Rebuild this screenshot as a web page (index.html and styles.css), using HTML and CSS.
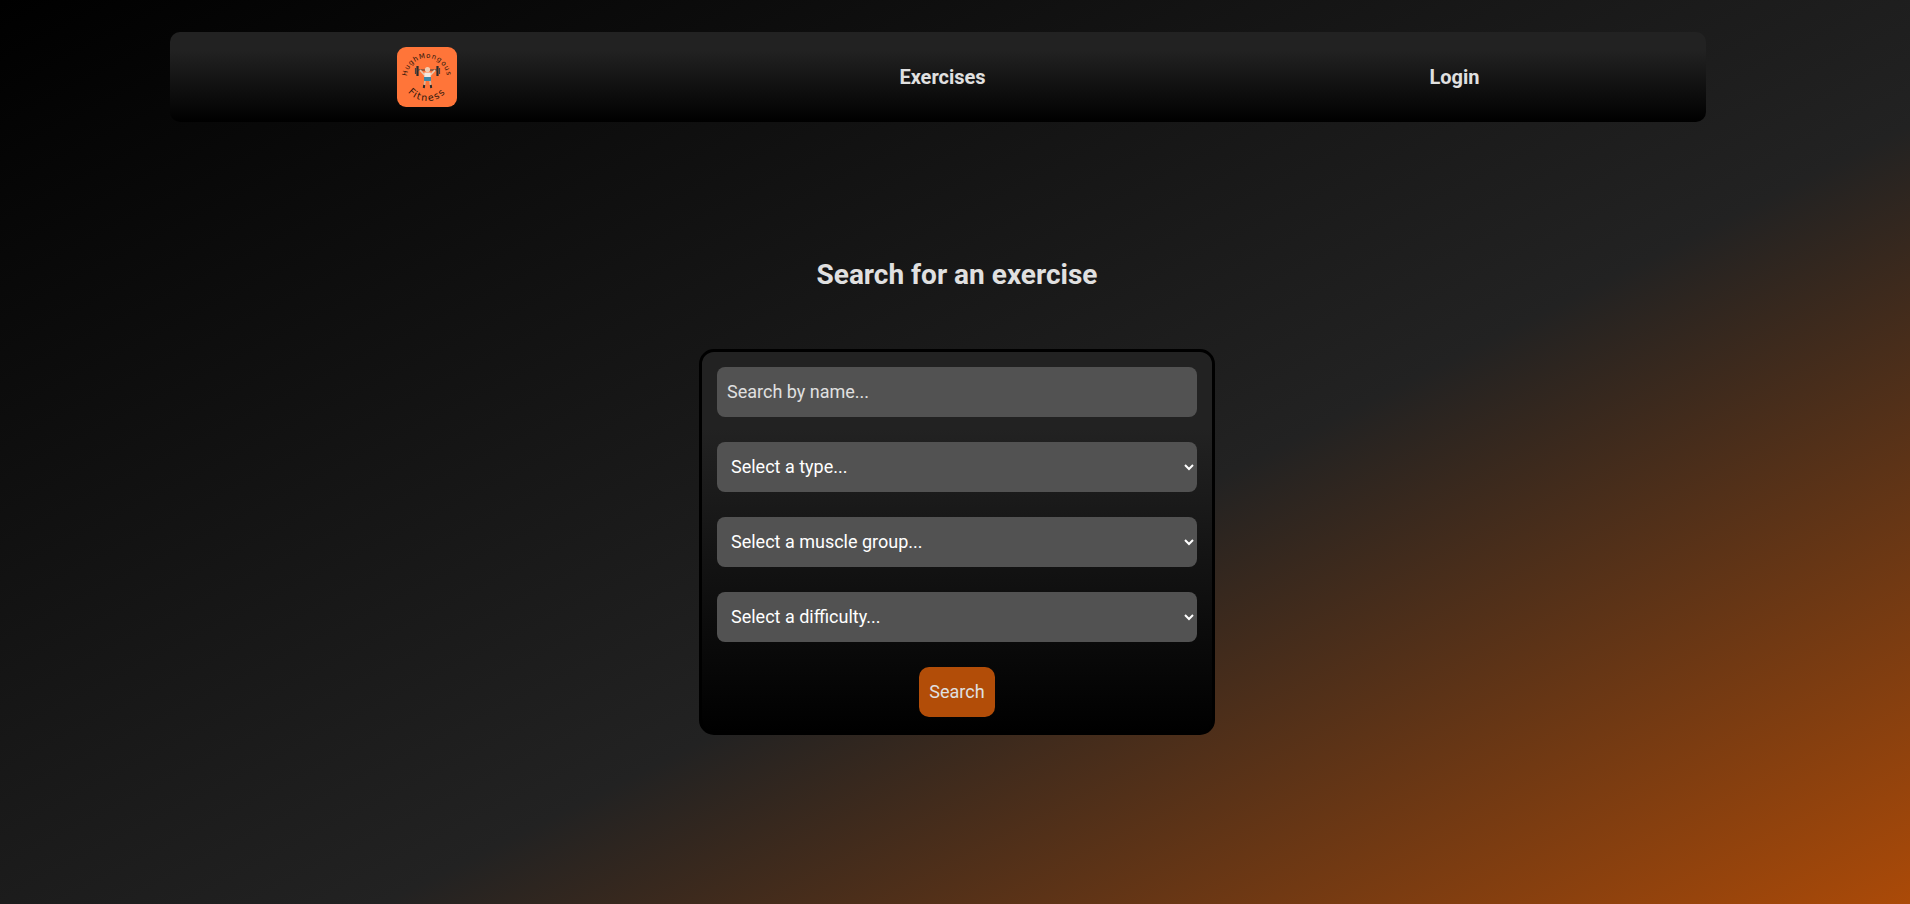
FILE: index.html
```html
<!DOCTYPE html>
<html lang="en">
<head>
  <meta charset="UTF-8">
  <meta name="viewport" content="width=device-width, initial-scale=1.0">
  <title>Exercises</title>
  <link rel="stylesheet" href="styles.css">
</head>
<body>
  <nav class="navbar">
    <a class="nav-item nav-logo" href="#">
      <svg class="logo" viewBox="0 0 60 60" role="img" aria-label="HughMongous Fitness">
        <defs>
          <path id="arcTop" d="M10 31 A20 20 0 0 1 50 31"></path>
          <path id="arcBottom" d="M5 29 A25 25 0 0 0 55 29"></path>
        </defs>
        <rect width="60" height="60" rx="9" fill="#ff7539"></rect>
        <text class="logo-top"><textPath href="#arcTop" startOffset="50%" text-anchor="middle">HughMongous</textPath></text>
        <text class="logo-bottom"><textPath href="#arcBottom" startOffset="50%" text-anchor="middle">Fitness</textPath></text>
        <!-- lifter -->
        <path d="M20.5 19v10M40.5 19v10" stroke="#2b2b2b" stroke-width="2.2"></path>
        <path d="M18.5 21v6M42.5 21v6" stroke="#444" stroke-width="1.2"></path>
        <path d="M20 23h21" stroke="#3a3a3a" stroke-width="1"></path>
        <path d="M23 23l4.5 5M38 23l-4.5 5" fill="none" stroke="#e6c7ae" stroke-width="1.8"></path>
        <circle cx="30.5" cy="22.5" r="2.6" fill="#f0cdb2"></circle>
        <rect x="27.3" y="25.5" width="6.4" height="5" fill="#f3e9df"></rect>
        <rect x="27" y="30" width="7" height="4" fill="#3f87a6"></rect>
        <path d="M28 34l-.6 4M33 34l.6 4" stroke="#d9b295" stroke-width="1.8"></path>
        <path d="M27.2 38l-.4 3M33.8 38l.4 3" stroke="#2b2b2b" stroke-width="2"></path>
      </svg>
    </a>
    <a class="nav-item nav-link" href="#">Exercises</a>
    <a class="nav-item nav-link" href="#">Login</a>
  </nav>

  <main class="content">
    <h1>Search for an exercise</h1>
    <form class="search-form">
      <input type="text" placeholder="Search by name...">
      <select>
        <option>Select a type...</option>
      </select>
      <select>
        <option>Select a muscle group...</option>
      </select>
      <select>
        <option>Select a difficulty...</option>
      </select>
      <button type="submit">Search</button>
    </form>
  </main>
</body>
</html>
```

FILE: styles.css
```css
html {
  height: 100%;
}

body {
  margin: 0;
  min-height: 904px;
  box-sizing: border-box;
  padding-top: 32px;
  overflow: hidden;
  font-family: Roboto, "Liberation Sans", sans-serif;
  color: #e0e0e0;
  background: linear-gradient(153deg, #000 0%, #222 58.5%, #ab4a08 100%);
}

.navbar {
  display: grid;
  grid-template-columns: repeat(3, 1fr);
  align-items: center;
  width: 1536px;
  height: 90px;
  margin-left: 170px;
  border-radius: 10px;
  background: linear-gradient(to bottom, #222 0%, #222 20%, #000 100%);
}

.nav-item {
  display: flex;
  justify-content: center;
  align-items: center;
  color: #e0e0e0;
  font-size: 20px;
  font-weight: 700;
  text-decoration: none;
}

.nav-logo {
  padding-left: 2px;
}

.nav-link {
  padding-left: 9px;
}

.logo {
  width: 60px;
  height: 60px;
}

.logo-top,
.logo-bottom {
  fill: #2a140a;
  font-family: "DejaVu Sans", sans-serif;
  font-weight: 400;
}

.logo-top {
  font-size: 7px;
  letter-spacing: 0.8px;
}

.logo-bottom {
  font-size: 9.5px;
  letter-spacing: 1.5px;
}

.content {
  display: flex;
  flex-direction: column;
  align-items: center;
  padding-left: 4px;
}

h1 {
  margin: 136px 0 58px;
  font-size: 28px;
  line-height: 33px;
  font-weight: 700;
  color: #e0e0e0;
}

.search-form {
  display: flex;
  flex-direction: column;
  align-items: center;
  gap: 25px;
  box-sizing: border-box;
  width: 516px;
  padding: 14.6px 15px 15.4px;
  border: 3px solid #000;
  border-radius: 15px;
  background: linear-gradient(to bottom, #222 0%, #222 20%, #000 100%);
}

.search-form input,
.search-form select {
  box-sizing: border-box;
  width: 100%;
  height: 50px;
  border: none;
  border-radius: 8px;
  background: #525252;
  color: #fff;
  font-family: inherit;
  font-size: 18px;
}

.search-form input {
  padding: 0 10px;
}

.search-form input::placeholder {
  color: #e0e0e0;
  opacity: 1;
}

.search-form select {
  padding: 0 10px;
}

.search-form button {
  height: 50px;
  padding: 0 10px;
  border: none;
  border-radius: 10px;
  background: #b24d08;
  color: #e0e0e0;
  font-family: inherit;
  font-size: 18px;
}
```
